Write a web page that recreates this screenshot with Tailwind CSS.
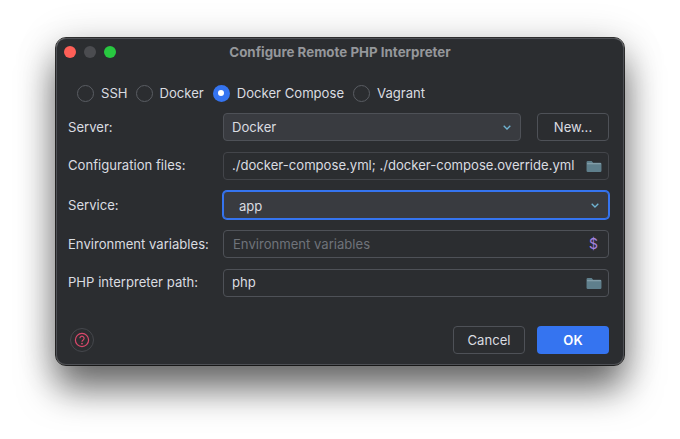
<!DOCTYPE html>
<html><head><meta charset="utf-8">
<script src="https://cdn.jsdelivr.net/npm/@tailwindcss/browser@4"></script>
</head>
<body class="w-[680px] h-[439px] overflow-hidden bg-white font-['Inter',sans-serif] text-[13.1px] leading-[18px] text-[#dadce0]">
<div class="pl-[56px] pt-[38px]">
<div class="w-[568px] h-[327px] rounded-[10px] bg-[#2b2d30] border border-[#4e5055] outline outline-black/80 shadow-[0_24px_36px_rgba(0,0,0,0.55),0_4px_40px_rgba(0,0,0,0.18)] flex flex-col">
  <div class="relative h-[25px] flex items-center justify-center">
    <div class="absolute left-[7px] top-[7px] flex gap-[8px]">
      <span class="w-3 h-3 rounded-full bg-[#fe5f57]"></span>
      <span class="w-3 h-3 rounded-full bg-[#4b4c50]"></span>
      <span class="w-3 h-3 rounded-full bg-[#28c840]"></span>
    </div>
    <span class="font-bold text-[13.35px] text-[#95979b]">Configure Remote PHP Interpreter</span>
  </div>
  <div class="flex items-center h-[18px] mt-[20px] ml-[20px]">
    <span class="w-[17px] h-[17px] rounded-full border border-[#5a5d63] bg-[#2b2d30] mr-[7px]"></span><span class="mr-[8px]">SSH</span>
    <span class="w-[17px] h-[17px] rounded-full border border-[#5a5d63] bg-[#2b2d30] mr-[7px]"></span><span class="mr-[9px]">Docker</span>
    <span class="w-[17px] h-[17px] rounded-full bg-[#3574f0] mr-[7px] flex items-center justify-center"><span class="w-[6px] h-[6px] rounded-full bg-white"></span></span><span class="mr-[9px]">Docker Compose</span>
    <span class="w-[17px] h-[17px] rounded-full border border-[#5a5d63] bg-[#2b2d30] mr-[7px]"></span><span>Vagrant</span>
  </div>
  <div class="mt-[11px] ml-[11px] grid grid-cols-[155px_386px] gap-y-[11px] items-center">
    <label>Server:</label>
    <div class="flex gap-[16px]">
      <div class="w-[298px] h-[28px] rounded-[4px] bg-[#393b40] border border-[#4e5157] flex items-center justify-between pl-[8px] pr-[9px]">
        <span>Docker</span>
        <svg width="8" height="5" viewBox="0 0 8 5" fill="none"><path d="M.7.7L4 4l3.3-3.3" stroke="#6fb3d2" stroke-width="1.3"/></svg>
      </div>
      <div class="w-[72px] h-[28px] rounded-[4px] border border-[#4e5157] flex items-center justify-center">New...</div>
    </div>
    <label class="-mt-[2px]">Configuration files:</label>
    <div class="h-[28px] rounded-[4px] border border-[#43454a] flex items-center justify-between pl-[8px] pr-[6px]">
      <span class="whitespace-nowrap -mt-[2px]">./docker-compose.yml; ./docker-compose.override.yml</span>
      <svg width="16" height="13" viewBox="0 0 15 12"><path d="M0.5 2a1.2 1.2 0 0 1 1.2-1.2h3.6l1.4 1.6h6.6a1.2 1.2 0 0 1 1.2 1.2V10a1.2 1.2 0 0 1-1.2 1.2H1.7A1.2 1.2 0 0 1 .5 10z" fill="#5f7f8c"/><path d="M1 3.4h13" stroke="#8aa4af" stroke-width="1"/></svg>
    </div>
    <label>Service:</label>
    <div class="h-[28px] rounded-[4px] bg-[#393b40] border border-[#3574f0] ring-1 ring-[#3574f0] flex items-center justify-between pl-[15px] pr-[9px]">
      <span class="mt-[1px]">app</span>
      <svg width="8" height="5" viewBox="0 0 8 5" fill="none"><path d="M.7.7L4 4l3.3-3.3" stroke="#6fb3d2" stroke-width="1.3"/></svg>
    </div>
    <label>Environment variables:</label>
    <div class="h-[28px] rounded-[4px] border border-[#4e5157] flex items-center justify-between pl-[9px] pr-[10px]">
      <span class="text-[#6f737a]">Environment variables</span>
      <span class="text-[#a583e0] text-[14px]">$</span>
    </div>
    <label class="-mt-[2px]">PHP interpreter path:</label>
    <div class="h-[28px] rounded-[4px] border border-[#4e5157] flex items-center justify-between pl-[8px] pr-[6px]">
      <span class="-mt-[2px]">php</span>
      <svg width="16" height="13" viewBox="0 0 15 12"><path d="M0.5 2a1.2 1.2 0 0 1 1.2-1.2h3.6l1.4 1.6h6.6a1.2 1.2 0 0 1 1.2 1.2V10a1.2 1.2 0 0 1-1.2 1.2H1.7A1.2 1.2 0 0 1 .5 10z" fill="#5f7f8c"/><path d="M1 3.4h13" stroke="#8aa4af" stroke-width="1"/></svg>
    </div>
  </div>
  <div class="mt-auto mb-[10px] flex items-center pl-[13px] pr-[14px]">
    <span class="w-[24px] h-[24px] rounded-full border border-[#45474c] flex items-center justify-center">
      <svg width="16" height="16" viewBox="0 0 16 16" fill="none"><circle cx="8" cy="8" r="6.6" stroke="#d9486b" stroke-width="1.2"/><path d="M5.9 6.3a2.1 2.1 0 1 1 3.3 1.7c-.8.5-1.2.9-1.2 1.7" stroke="#d9486b" stroke-width="1.2"/><circle cx="8" cy="11.6" r=".9" fill="#d9486b"/></svg>
    </span>
    <div class="ml-auto flex gap-[12px]">
      <div class="w-[72px] h-[28px] rounded-[4px] border border-[#4e5157] flex items-center justify-center">Cancel</div>
      <div class="w-[72px] h-[28px] rounded-[4px] bg-[#3574f0] text-white font-semibold flex items-center justify-center">OK</div>
    </div>
  </div>
</div>
</div>
</body></html>
